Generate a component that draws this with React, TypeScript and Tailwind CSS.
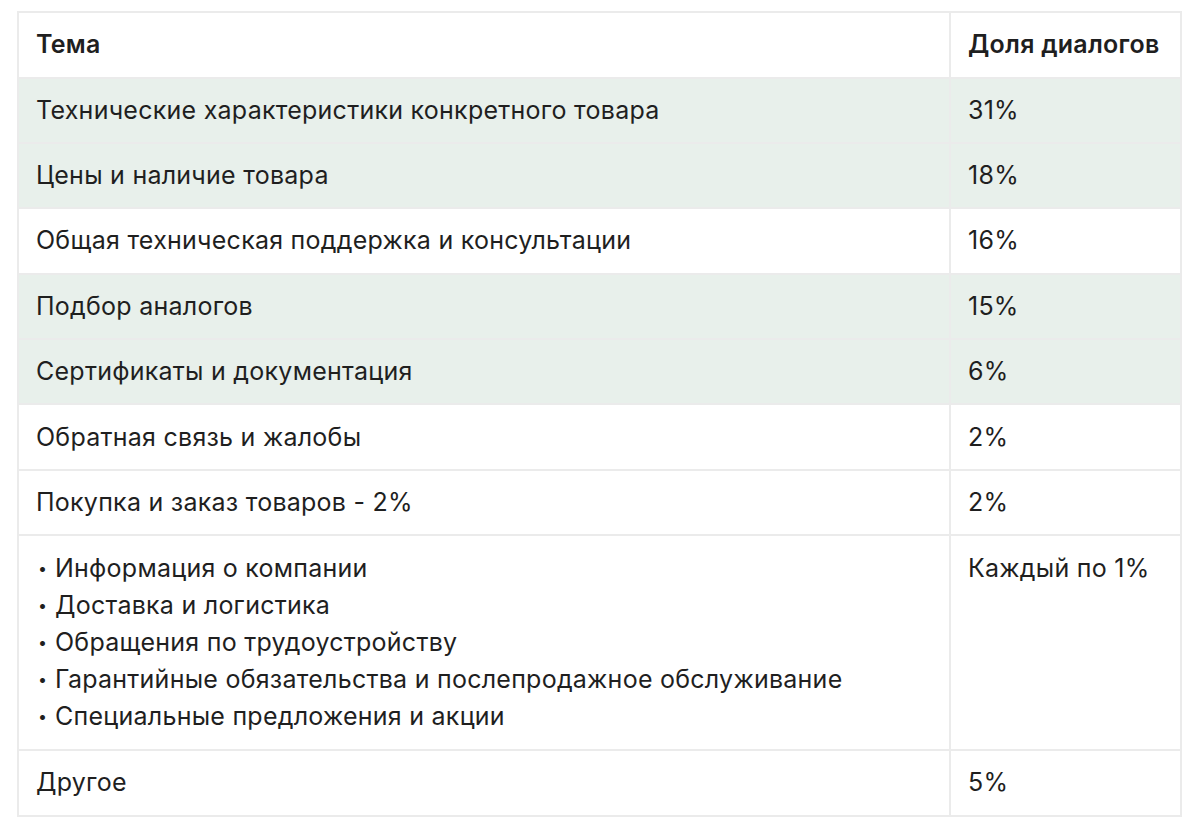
import React from "react";

const rows: { topic: React.ReactNode; share: string; green?: boolean }[] = [
  { topic: "Технические характеристики конкретного товара", share: "31%", green: true },
  { topic: "Цены и наличие товара", share: "18%", green: true },
  { topic: "Общая техническая поддержка и консультации", share: "16%" },
  { topic: "Подбор аналогов", share: "15%", green: true },
  { topic: "Сертификаты и документация", share: "6%", green: true },
  { topic: "Обратная связь и жалобы", share: "2%" },
  { topic: "Покупка и заказ товаров - 2%", share: "2%" },
];

const bullets = [
  "Информация о компании",
  "Доставка и логистика",
  "Обращения по трудоустройству",
  "Гарантийные обязательства и послепродажное обслуживание",
  "Специальные предложения и акции",
];

export default function App() {
  return (
    <div
      className="w-[1200px] h-[830px] bg-white pt-[11px] pl-[17px] text-[#1f1f1f]"
      style={{ fontFamily: "Inter, 'Noto Sans', sans-serif" }}
    >
      <table className="w-[1165px] border-collapse border-2 border-[#ebebeb] text-[25px] leading-[37px] tracking-[0.25px]">
        <thead>
          <tr className="h-[65.5px]">
            <th className="border-2 border-[#ebebeb] px-[17px] text-left font-semibold">Тема</th>
            <th className="w-[231px] border-2 border-[#ebebeb] px-[17px] text-left font-semibold">Доля диалогов</th>
          </tr>
        </thead>
        <tbody>
          {rows.map((r, i) => (
            <tr key={i} className={`h-[65.4px] ${r.green ? "bg-[#e8f0eb]" : "bg-white"}`}>
              <td className="border-2 border-[#ebebeb] px-[17px] align-middle">{r.topic}</td>
              <td className="border-2 border-[#ebebeb] px-[17px] align-middle">{r.share}</td>
            </tr>
          ))}
          <tr>
            <td className="border-2 border-[#ebebeb] px-[17px] py-[14px] align-top">
              {bullets.map((b, i) => (
                <div key={i} className="flex items-center">
                  <span className="w-[19px] text-[16px] leading-[37px] pl-[2px]">•</span>
                  <span>{b}</span>
                </div>
              ))}
            </td>
            <td className="border-2 border-[#ebebeb] px-[17px] py-[14px] align-top">Каждый по 1%</td>
          </tr>
          <tr className="h-[65.4px]">
            <td className="border-2 border-[#ebebeb] px-[17px] align-middle">Другое</td>
            <td className="border-2 border-[#ebebeb] px-[17px] align-middle">5%</td>
          </tr>
        </tbody>
      </table>
    </div>
  );
}
